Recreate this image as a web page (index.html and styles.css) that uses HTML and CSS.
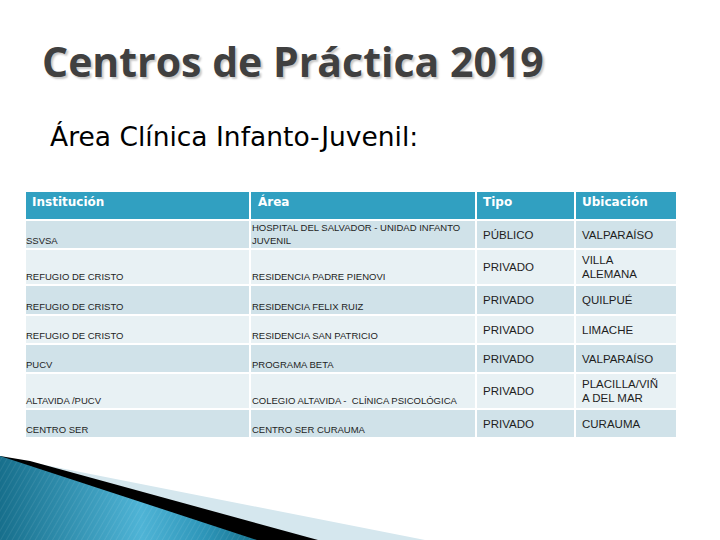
FILE: index.html
```html
<!DOCTYPE html>
<html lang="es">
<head>
<meta charset="utf-8">
<title>Centros de Práctica 2019</title>
<link rel="stylesheet" href="styles.css">
</head>
<body>
<div class="slide">
  <h1 class="title">Centros de Práctica 2019</h1>
  <p class="subtitle">Área Clínica Infanto-Juvenil:</p>
  <table class="centers">
    <thead>
      <tr class="head">
        <th class="c1">Institución</th>
        <th class="c2">Área</th>
        <th class="c3">Tipo</th>
        <th class="c4">Ubicación</th>
      </tr>
    </thead>
    <tbody>
      <tr class="odd r-std">
        <td class="c1">SSVSA</td>
        <td class="c2">HOSPITAL DEL SALVADOR - UNIDAD INFANTO JUVENIL</td>
        <td class="c3">PÚBLICO</td>
        <td class="c4">VALPARAÍSO</td>
      </tr>
      <tr class="even r-tall">
        <td class="c1">REFUGIO DE CRISTO</td>
        <td class="c2">RESIDENCIA PADRE PIENOVI</td>
        <td class="c3">PRIVADO</td>
        <td class="c4">VILLA<br>ALEMANA</td>
      </tr>
      <tr class="odd r-mid">
        <td class="c1">REFUGIO DE CRISTO</td>
        <td class="c2">RESIDENCIA FELIX RUIZ</td>
        <td class="c3">PRIVADO</td>
        <td class="c4">QUILPUÉ</td>
      </tr>
      <tr class="even r-std">
        <td class="c1">REFUGIO DE CRISTO</td>
        <td class="c2">RESIDENCIA SAN PATRICIO</td>
        <td class="c3">PRIVADO</td>
        <td class="c4">LIMACHE</td>
      </tr>
      <tr class="odd r-std">
        <td class="c1">PUCV</td>
        <td class="c2">PROGRAMA BETA</td>
        <td class="c3">PRIVADO</td>
        <td class="c4">VALPARAÍSO</td>
      </tr>
      <tr class="even r-tall">
        <td class="c1">ALTAVIDA /PUCV</td>
        <td class="c2">COLEGIO ALTAVIDA -&nbsp; CLÍNICA PSICOLÓGICA</td>
        <td class="c3">PRIVADO</td>
        <td class="c4">PLACILLA/VIÑ<br>A DEL MAR</td>
      </tr>
      <tr class="odd r-std">
        <td class="c1">CENTRO SER</td>
        <td class="c2">CENTRO SER CURAUMA</td>
        <td class="c3">PRIVADO</td>
        <td class="c4">CURAUMA</td>
      </tr>
    </tbody>
  </table>
  <svg class="corner" width="440" height="90" viewBox="0 450 440 90" aria-hidden="true">
    <defs>
      <linearGradient id="teal" x1="0" y1="0" x2="1" y2="0">
        <stop offset="0" stop-color="#176f8c"/>
        <stop offset="0.55" stop-color="#4fb4d6"/>
        <stop offset="0.8" stop-color="#2d95b8"/>
        <stop offset="1" stop-color="#17738f"/>
      </linearGradient>
      <pattern id="lines" width="5" height="5" patternUnits="userSpaceOnUse" patternTransform="rotate(30)">
        <rect width="1" height="5" fill="#ffffff" opacity="0.08"/>
      </pattern>
    </defs>
    <polygon points="0,456 60,468 425,540 0,540" fill="#d5e7ee"/>
    <polygon points="0,456 30,461 318,540 0,540" fill="#000"/>
    <polygon points="0,456 257,540 0,540" fill="url(#teal)"/>
    <polygon points="0,456 257,540 0,540" fill="url(#lines)"/>
  </svg>
</div>
</body>
</html>
```
FILE: styles.css
```css
html, body {
  margin: 0;
  padding: 0;
  background: #ffffff;
}

.slide {
  position: relative;
  width: 720px;
  height: 540px;
  overflow: hidden;
  background: #ffffff;
  padding: 0;
  box-sizing: border-box;
}

.title {
  margin: 0;
  padding: 36px 0 0 42px;
  font-family: "Open Sans", "DejaVu Sans", sans-serif;
  font-weight: 700;
  font-size: 41px;
  line-height: 50px;
  color: #404040;
  letter-spacing: 0;
  text-shadow: 2px 2px 2px rgba(0, 0, 0, 0.22);
}

.subtitle {
  margin: 0;
  padding: 36px 0 0 50px;
  font-family: "DejaVu Sans", sans-serif;
  font-size: 26.5px;
  line-height: 30px;
  color: #000000;
}

.centers {
  margin: 38px 0 0 24px;
  border-collapse: separate;
  border-spacing: 2px;
  font-family: "Liberation Sans", Arial, sans-serif;
  color: #1e1e1e;
}

.centers th,
.centers td {
  padding: 0;
  text-align: left;
}

.c1 { width: 223px; }
.c2 { width: 224px; }
.c3 { width: 97px; }
.c4 { width: 100px; }

.head th {
  height: 27px;
  background: #31a0c1;
  color: #ffffff;
  font-family: "DejaVu Sans", sans-serif;
  font-weight: 700;
  font-size: 12px;
  vertical-align: top;
  padding-top: 3px;
  box-sizing: border-box;
}

.head th.c1 { padding-left: 6px; }
.head th.c2 { padding-left: 7px; }
.head th.c3,
.head th.c4 { padding-left: 6px; }

.odd td { background: #d0e2e9; }
.even td { background: #e8f1f4; }

.r-std td { height: 27px; }
.r-mid td { height: 28px; }
.r-tall td { height: 34px; }

.centers td {
  box-sizing: border-box;
}

.centers td.c1,
.centers td.c2 {
  vertical-align: bottom;
  font-size: 9.5px;
  line-height: 13px;
  padding-bottom: 1px;
}

.centers td.c2 { padding-left: 1px; }

.centers td.c3,
.centers td.c4 {
  vertical-align: middle;
  font-size: 11.5px;
  line-height: 14px;
  padding-left: 6px;
}

.corner {
  position: absolute;
  left: 0;
  bottom: 0;
  display: block;
}
```
